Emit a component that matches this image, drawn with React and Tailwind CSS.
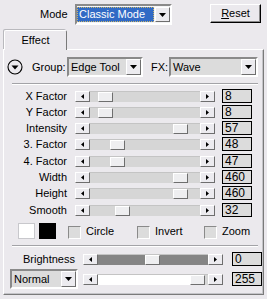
import React from "react";

// slider rows: pos = thumb offset inside the track (px)
const rows = [
  { label: "X Factor", value: "8", pos: 8, cls: "" },
  { label: "Y Factor", value: "8", pos: 8, cls: "" },
  { label: "Intensity", value: "57", pos: 83, cls: "" },
  { label: "3. Factor", value: "48", pos: 20, cls: "" },
  { label: "4. Factor", value: "47", pos: 20, cls: "mt-px" },
  { label: "Width", value: "460", pos: 83, cls: "" },
  { label: "Height", value: "460", pos: 83, cls: "" },
  { label: "Smooth", value: "32", pos: 25, cls: "mt-px" },
];

const raised =
  "border border-t-white border-l-white border-r-[#6e6e6e] border-b-[#6e6e6e]";

const ArrowBtn = ({ dir }) => (
  <div className={`w-[15px] h-[11px] shrink-0 flex items-center justify-center bg-[#ecebef] ${raised}`}>
    <svg width="3" height="5" viewBox="0 0 3 5">
      {dir === "left" ? <path d="M3 0v5L0 2.5z" fill="#000" /> : <path d="M0 0v5l3-2.5z" fill="#000" />}
    </svg>
  </div>
);

const Thumb = () => (
  <div className={`w-[15px] h-full shrink-0 bg-[#eeeef0] ${raised}`} />
);

const Slider = ({ pos, left = "bg-[#d6d6d6]", right = "bg-[#d6d6d6]" }) => (
  <div className="flex items-center h-[11px]">
    <ArrowBtn dir="left" />
    <div className="w-[110px] h-[11px] flex border-t border-[#c4c4c4]">
      <div className={`h-full ${left}`} style={{ width: pos }} />
      <Thumb />
      <div className={`flex-1 h-full ${right}`} />
    </div>
    <ArrowBtn dir="right" />
  </div>
);

const ValueBox = ({ value, className }) => (
  <div className={`w-[30px] h-[14px] border border-black bg-[#dcdcdc] pl-[2px] leading-[12px] text-[12px] ${className}`}>
    {value}
  </div>
);

const DropBtn = () => (
  <div className={`w-[15px] h-full shrink-0 flex items-center justify-center bg-[#ecebef] ${raised}`}>
    <svg width="7" height="4" viewBox="0 0 7 4">
      <path d="M0 0h7L3.5 4z" fill="#000" />
    </svg>
  </div>
);

const Combo = ({ value, className }) => (
  <div className={`flex border-2 border-t-[#8a8a8a] border-l-[#8a8a8a] border-r-white border-b-white bg-[#dcdcdc] ${className}`}>
    <div className="flex-1 flex items-center pl-[2px]">{value}</div>
    <DropBtn />
  </div>
);

const Separator = () => (
  <div className="ml-[8px] w-[246px] border-t border-[#a3a3a7] border-b border-b-white" />
);

const Check = ({ label, className }) => (
  <div className={`flex items-center ${className}`}>
    <div className="w-[13px] h-[13px] mt-[2px] border border-t-[#8a8a8a] border-l-[#8a8a8a] border-r-white border-b-white bg-[#dcdcdc]" />
    <span className="ml-[5px]">{label}</span>
  </div>
);

export default function App() {
  return (
    <div className="w-[267px] h-[299px] overflow-hidden bg-[#ebe9ed] text-black text-[11px] font-['Liberation_Sans',Arial,sans-serif]">
      {/* top row */}
      <div className="flex items-start pt-[4px]">
        <div className="ml-[40px] w-[35px] leading-[21px]">Mode</div>
        <div className="flex w-[97px] h-[21px] border-2 border-t-[#8a8a8a] border-l-[#8a8a8a] border-r-white border-b-white bg-[#f4f4f6] py-[1px]">
          <div className="flex-1 flex items-center pl-[2px] mr-[1px] bg-[#316ac5] text-white outline-1 outline-dotted outline-[#c9b46a] -outline-offset-1">
            Classic Mode
          </div>
          <DropBtn />
        </div>
        <div className="ml-auto mr-[6px] w-[51px] h-[19px] flex items-center justify-center border border-t-white border-l-white border-r-black border-b-black shadow-[inset_-1px_-1px_0_#8a8a8a]">
          <span><span className="underline">R</span>eset</span>
        </div>
      </div>

      {/* tab */}
      <div className="mt-[5px] ml-[4px] w-[63px] h-[20px] relative z-10 -mb-px flex items-center justify-center bg-[#ebe9ed] border border-b-0 border-t-white border-l-white border-r-[#7a7a7a] rounded-t-[2px] shadow-[-1px_-1px_0_#b9b9bd]">
        Effect
      </div>

      {/* panel */}
      <div className="mx-[3px] h-[246px] border border-t-white border-l-white border-r-[#7a7a7a] border-b-[#7a7a7a] shadow-[inset_-1px_-1px_0_#c4c4c8]">
        {/* group row */}
        <div className="flex items-center mt-[7px] h-[20px]">
          <svg className="ml-[3px]" width="16" height="16" viewBox="0 0 16 16">
            <circle cx="8" cy="8" r="7" fill="none" stroke="#000" strokeWidth="1.1" />
            <path d="M4.5 6.5h7L8 10.5z" fill="#000" />
          </svg>
          <div className="ml-[9px] w-[35px]">Group:</div>
          <Combo value="Edge Tool" className="w-[76px] h-[20px]" />
          <div className="ml-[8px] w-[18px]">FX:</div>
          <Combo value="Wave" className="w-[89px] h-[20px]" />
        </div>

        <div className="mt-[6px]">
          <Separator />
        </div>

        {/* sliders */}
        <div className="mt-[3px]">
          {rows.map((r) => (
            <div key={r.label} className={`flex items-center h-4 ${r.cls}`}>
              <div className="w-[63px] text-right">{r.label}</div>
              <div className="ml-[8px]">
                <Slider pos={r.pos} />
              </div>
              <ValueBox value={r.value} className="ml-[7px]" />
            </div>
          ))}
        </div>

        {/* colours and options */}
        <div className="flex items-center mt-[5px] h-[16px]">
          <div className="ml-[14px] w-[17px] h-[16px] bg-white border border-[#c8c8cc]" />
          <div className="ml-[4px] w-[17px] h-[16px] bg-black" />
          <Check label="Circle" className="ml-[12px] w-[69px]" />
          <Check label="Invert" className="w-[67px]" />
          <Check label="Zoom" className="" />
        </div>

        <div className="mt-[6px]">
          <Separator />
        </div>

        {/* brightness */}
        <div className="flex items-center mt-[5px] h-[14px]">
          <div className="w-[71px] text-right">Brightness</div>
          <div className="ml-[8px]">
            <Slider pos={47} left="bg-[#858585]" right="bg-[#858585]" />
          </div>
          <ValueBox value="0" className="ml-[9px]" />
        </div>

        {/* blend mode */}
        <div className="flex items-center mt-[3px] h-[20px]">
          <Combo value="Normal" className="ml-[6px] w-[68px] h-[20px]" />
          <div className="ml-[5px]">
            <Slider pos={92} left="bg-white" right="bg-[#d6d6d6]" />
          </div>
          <ValueBox value="255" className="ml-[9px]" />
        </div>
      </div>
    </div>
  );
}
